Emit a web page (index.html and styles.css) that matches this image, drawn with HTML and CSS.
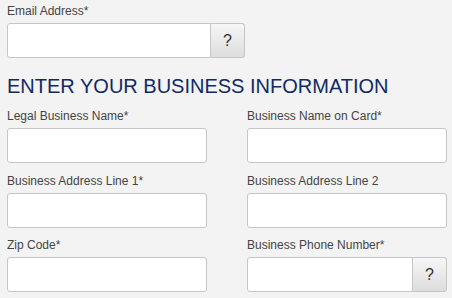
FILE: index.html
```html
<!DOCTYPE html>
<html lang="en">

<head>
    <meta charset="UTF-8">
    <meta name="viewport" content="width=device-width, initial-scale=1.0">
    <title>Business Information</title>
    <link rel="stylesheet" href="styles.css">
</head>

<body>
    <form class="container">
        <div class="form-group email-group">
            <label for="email">Email Address*</label>
            <div class="input-help">
                <input type="email" id="email" name="email">
                <button type="button" class="help-btn">?</button>
            </div>
        </div>

        <h2>ENTER YOUR BUSINESS INFORMATION</h2>

        <div class="form-grid">
            <div class="form-group">
                <label for="legalName">Legal Business Name*</label>
                <input type="text" id="legalName" name="legalName">
            </div>
            <div class="form-group">
                <label for="cardName">Business Name on Card*</label>
                <input type="text" id="cardName" name="cardName">
            </div>
            <div class="form-group">
                <label for="address1">Business Address Line 1*</label>
                <input type="text" id="address1" name="address1">
            </div>
            <div class="form-group">
                <label for="address2">Business Address Line 2</label>
                <input type="text" id="address2" name="address2">
            </div>
            <div class="form-group">
                <label for="zip">Zip Code*</label>
                <input type="text" id="zip" name="zip">
            </div>
            <div class="form-group">
                <label for="phone">Business Phone Number*</label>
                <div class="input-help">
                    <input type="tel" id="phone" name="phone">
                    <button type="button" class="help-btn">?</button>
                </div>
            </div>
        </div>
    </form>
</body>

</html>
```

FILE: styles.css
```css
body {
    margin: 0;
    font-family: "Liberation Sans", Arial, sans-serif;
    background-color: #f3f3f3;
}

.container {
    padding: 2px 5px 0 7px;
}

.form-group {
    margin-bottom: 8.5px;
}

.email-group {
    width: 238px;
    margin-bottom: 16px;
}

label {
    display: block;
    font-size: 12px;
    line-height: 18px;
    color: #444;
    margin-bottom: 3px;
}

h2 {
    margin: 0 0 9px;
    font-size: 20px;
    line-height: 24px;
    font-weight: normal;
    color: #112a64;
}

.form-grid {
    display: grid;
    grid-template-columns: 200px 200px;
    column-gap: 40px;
}

input[type="text"],
input[type="email"],
input[type="tel"] {
    display: block;
    box-sizing: border-box;
    width: 100%;
    height: 35px;
    margin: 0;
    padding: 6px 8px;
    font-size: 14px;
    border: 1px solid #c6c6c6;
    border-radius: 3px;
    background-color: #fff;
}

.input-help {
    display: flex;
}

.input-help input[type="email"],
.input-help input[type="tel"] {
    flex: 1;
    min-width: 0;
    border-radius: 3px 0 0 3px;
}

.help-btn {
    width: 34px;
    height: 35px;
    margin: 0;
    padding: 0;
    font-family: "Liberation Sans", Arial, sans-serif;
    font-size: 16px;
    color: #333;
    border: 1px solid #c6c6c6;
    border-left: none;
    border-radius: 0 3px 3px 0;
    background: linear-gradient(#f6f6f6, #dddddd);
    cursor: pointer;
}
```
